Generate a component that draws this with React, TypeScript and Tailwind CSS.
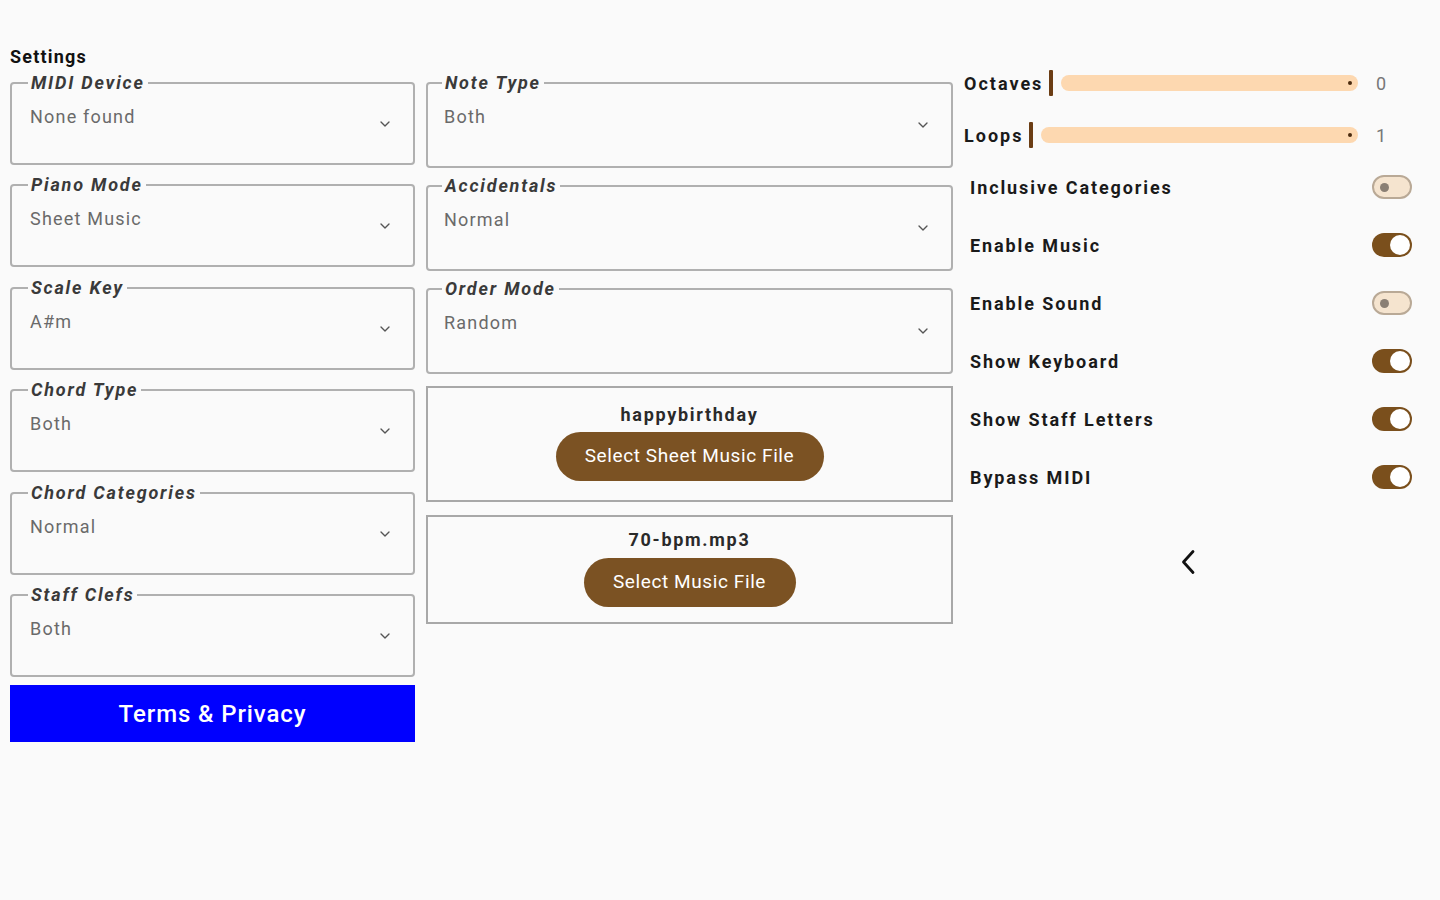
import React from 'react';
import { ChevronDown } from 'lucide-react';

const font = { fontFamily: 'Roboto, "Noto Sans", "Liberation Sans", sans-serif' };

function SelectField({ label, value, tall }: { label: string; value: string; tall?: boolean }) {
  return (
    <fieldset
      className={`border-2 border-[#b0b0b0] rounded-[4px] pr-[20px] m-0 ${tall ? 'h-[95px] pl-[14px]' : 'h-[92px] pl-[16px]'}`}
    >
      <legend className="px-[3px] text-[18px] leading-[20px] font-bold italic text-[#3a3a3a] tracking-[1.8px]">
        {label}
      </legend>
      <div className="flex justify-between">
        <span className="pl-[2px] pt-[13px] text-[18px] leading-[22px] text-[#6a6a6a] tracking-[1.2px]">{value}</span>
        <ChevronDown size={16} strokeWidth={2} className={`text-[#555] ${tall ? 'mt-[24px]' : 'mt-[23px]'}`} />
      </div>
    </fieldset>
  );
}

function SliderRow({ label, value, h }: { label: string; value: string; h: string }) {
  return (
    <div className={`flex items-center ${h}`}>
      <span className="text-[18px] font-bold text-[#1a1a1a] tracking-[2px]">{label}</span>
      <div className="ml-[6px] w-[4px] h-[26px] bg-[#6b3d14] rounded-[1px]" />
      <div className="ml-[8px] flex-1 h-[16px] rounded-full bg-[#fdd8b0] flex items-center justify-end pr-[6px]">
        <div className="w-[4px] h-[4px] rounded-full bg-[#4a2a0e]" />
      </div>
      <span className="w-[54px] pl-[18px] text-[18px] text-[#777]">{value}</span>
    </div>
  );
}

function ToggleRow({ label, on }: { label: string; on: boolean }) {
  return (
    <div className="flex items-center justify-between h-[58px] pl-[6px]">
      <span className="text-[18px] font-bold text-[#1a1a1a] tracking-[1.9px]">{label}</span>
      {on ? (
        <div className="w-[40px] h-[24px] rounded-full bg-[#7a4f1c] flex items-center justify-end pr-[2px]">
          <div className="w-[20px] h-[20px] rounded-full bg-white" />
        </div>
      ) : (
        <div className="w-[40px] h-[24px] rounded-full bg-[#f5e4cf] border-2 border-[#b9a996] flex items-center pl-[6px]">
          <div className="w-[9px] h-[9px] rounded-full bg-[#8a7f74]" />
        </div>
      )}
    </div>
  );
}

function FileBox({ name, button, h, pt, gap, bw }: { name: string; button: string; h: string; pt: string; gap: string; bw: string }) {
  return (
    <div className={`border-2 border-[#a8a8a8] flex flex-col items-center ${h} ${pt}`}>
      <span className="text-[18px] leading-[22px] font-bold text-[#2a2a2a] tracking-[1.7px]">{name}</span>
      <button className={`${gap} ${bw} h-[49px] rounded-full bg-[#7b5223] text-white text-[19px] tracking-[0.6px]`}>
        {button}
      </button>
    </div>
  );
}

export default function App() {
  return (
    <div className="min-h-screen bg-[#fafafa] pt-[47px] px-[10px]" style={font}>
      <div className="text-[18px] leading-[20px] font-bold text-[#111] tracking-[1.2px]">Settings</div>
      <div className="flex items-start gap-[11px] mt-[6px]">
        {/* Left column */}
        <div className="w-[405px] flex flex-col gap-[10.4px]">
          <SelectField label="MIDI Device" value="None found" />
          <SelectField label="Piano Mode" value="Sheet Music" />
          <SelectField label="Scale Key" value="A#m" />
          <SelectField label="Chord Type" value="Both" />
          <SelectField label="Chord Categories" value="Normal" />
          <SelectField label="Staff Clefs" value="Both" />
          <button className="-mt-[2px] h-[57px] bg-[#0000ff] text-white text-[24px] font-medium tracking-[0.9px]">
            Terms &amp; Privacy
          </button>
        </div>

        {/* Middle column */}
        <div className="w-[527px] flex flex-col gap-[8px]">
          <SelectField label="Note Type" value="Both" tall />
          <SelectField label="Accidentals" value="Normal" tall />
          <SelectField label="Order Mode" value="Random" tall />
          <div className="mt-[4px] flex flex-col gap-[13px]">
            <FileBox name="happybirthday" button="Select Sheet Music File" h="h-[116px]" pt="pt-[16px]" gap="mt-[6px]" bw="w-[268px]" />
            <FileBox name="70-bpm.mp3" button="Select Music File" h="h-[109px]" pt="pt-[12px]" gap="mt-[7px]" bw="w-[212px]" />
          </div>
        </div>

        {/* Right column */}
        <div className="w-[448px] flex flex-col -mt-[16px]">
          <SliderRow label="Octaves" value="0" h="h-[52px]" />
          <SliderRow label="Loops" value="1" h="h-[52px]" />
          <div className="-mt-[3px] flex flex-col">
            <ToggleRow label="Inclusive Categories" on={false} />
            <ToggleRow label="Enable Music" on />
            <ToggleRow label="Enable Sound" on={false} />
            <ToggleRow label="Show Keyboard" on />
            <ToggleRow label="Show Staff Letters" on />
            <ToggleRow label="Bypass MIDI" on />
          </div>
          <div className="flex justify-center mt-[42px]">
            <svg width="16" height="28" viewBox="0 0 16 28" fill="none" stroke="#111" strokeWidth="2.8" strokeLinecap="round" strokeLinejoin="round">
              <path d="M13 3.5 L3.5 14 L13 24.5" />
            </svg>
          </div>
        </div>
      </div>
    </div>
  );
}
